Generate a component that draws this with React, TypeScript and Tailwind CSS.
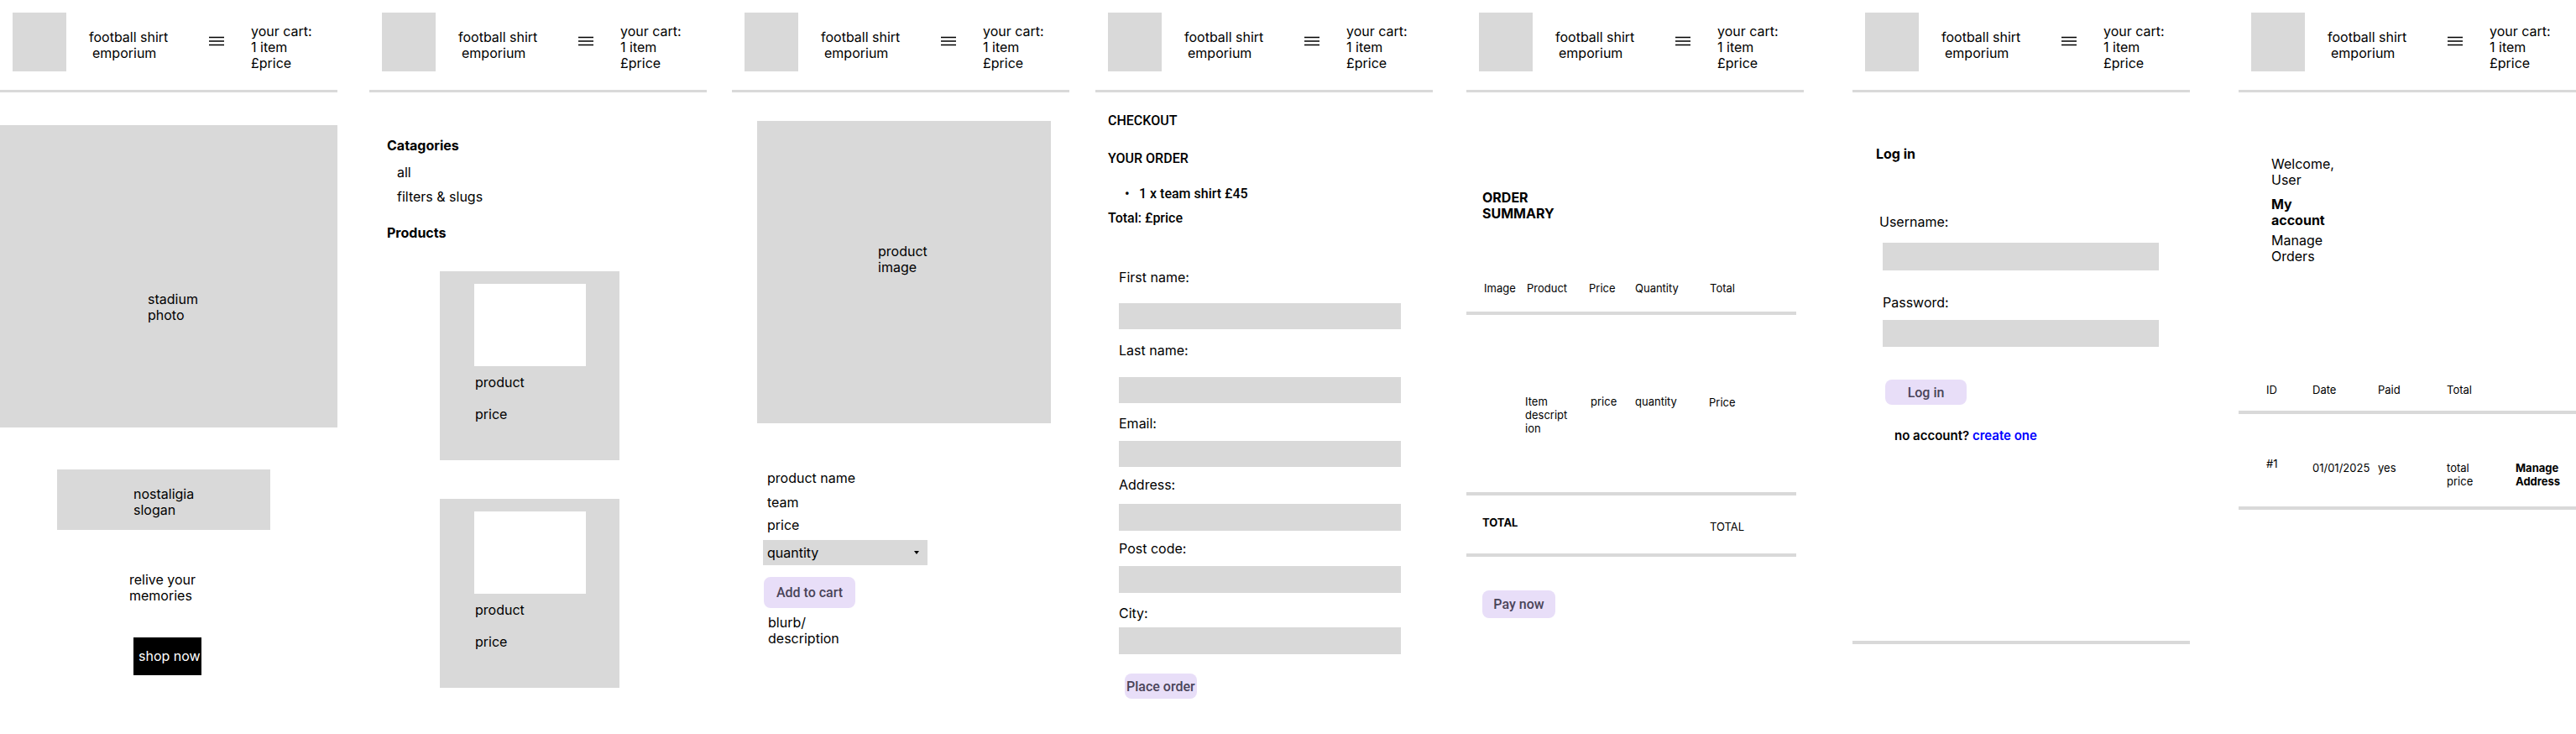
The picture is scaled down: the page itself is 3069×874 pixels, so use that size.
const gray = "bg-[#d9d9d9]";

function Header() {
  return (
    <div>
      <div className="flex h-[107px] items-start">
        <div className={`ml-[15px] mt-[15px] h-[70px] w-[64px] shrink-0 ${gray}`} />
        <div className="ml-[27px] mt-[35px] w-[143px] shrink-0 text-[16px] leading-[19px]">
          football shirt
          <br />
          <span className="pl-[4px]">emporium</span>
        </div>
        <svg className="mt-[43px] shrink-0" width="18" height="12" viewBox="0 0 18 12">
          <path d="M0 1.5H18M0 6H18M0 10.5H18" stroke="#000" strokeWidth="1.4" />
        </svg>
        <div className="ml-[32px] mt-[28px] text-[16px] leading-[19px]">
          your cart:
          <br />1 item
          <br />£price
        </div>
      </div>
      <div className={`h-[3px] w-full ${gray}`} />
    </div>
  );
}

function Frame({ children, className = "" }: { children?: React.ReactNode; className?: string }) {
  return (
    <div className={`flex h-[874px] w-[402px] shrink-0 flex-col text-[16px] leading-[19px] ${className}`}>
      <Header />
      {children}
    </div>
  );
}

function Home() {
  return (
    <Frame>
      <div className={`mt-[39px] h-[360px] w-full pl-[176px] pt-[198px] ${gray}`}>
        stadium
        <br />
        photo
      </div>
      <div className={`ml-[68px] mt-[50px] h-[72px] w-[254px] pl-[91px] pt-[20px] ${gray}`}>
        nostaligia
        <br />
        slogan
      </div>
      <div className="ml-[154px] mt-[50px]">
        relive your
        <br />
        memories
      </div>
      <button className="ml-[159px] mt-[40px] flex h-[45px] w-[81px] items-center bg-black pl-[6px] text-white">
        shop now
      </button>
    </Frame>
  );
}

function ProductCard() {
  return (
    <div className={`ml-[84px] h-[225px] w-[214px] pl-[41px] pt-[15px] ${gray}`}>
      <div className="h-[98px] w-[133px] bg-white" />
      <div className="ml-[1px] mt-[10px]">product</div>
      <div className="ml-[1px] mt-[19px]">price</div>
    </div>
  );
}

function Shop() {
  return (
    <Frame className="ml-[38px]">
      <div className="ml-[21px] mt-[54px] font-bold">Catagories</div>
      <div className="ml-[33px] mt-[13px]">all</div>
      <div className="ml-[33px] mt-[10px]">filters &amp; slugs</div>
      <div className="ml-[21px] mt-[24px] font-bold">Products</div>
      <div className="mt-[36px]">
        <ProductCard />
      </div>
      <div className="mt-[46px]">
        <ProductCard />
      </div>
    </Frame>
  );
}

function Product() {
  return (
    <Frame className="ml-[30px]">
      <div className={`ml-[30px] mt-[34px] h-[360px] w-[350px] pl-[144px] pt-[146px] ${gray}`}>
        product
        <br />
        image
      </div>
      <div className="ml-[42px] mt-[56px]">product name</div>
      <div className="ml-[42px] mt-[10px]">team</div>
      <div className="ml-[42px] mt-[8px]">price</div>
      <div className={`ml-[37px] mt-[8px] flex h-[30px] w-[196px] items-center justify-between pl-[5px] pr-[10px] ${gray}`}>
        <span>quantity</span>
        <svg width="6" height="4" viewBox="0 0 6 4">
          <path d="M0 0H6L3 4Z" fill="#000" />
        </svg>
      </div>
      <button className="ml-[38px] mt-[14px] h-[37px] w-[109px] rounded-[8px] bg-[#e8def8] font-['Roboto',sans-serif] font-medium text-[#4a4458]">
        Add to cart
      </button>
      <div className="ml-[43px] mt-[8px]">
        blurb/
        <br />
        description
      </div>
    </Frame>
  );
}

const checkoutFields = [
  { label: "First name:", lm: "mt-[52px]", im: "mt-[21px] h-[31px]" },
  { label: "Last name:", lm: "mt-[16px]", im: "mt-[22px] h-[31px]" },
  { label: "Email:", lm: "mt-[15px]", im: "mt-[11px] h-[31px]" },
  { label: "Address:", lm: "mt-[12px]", im: "mt-[13px] h-[32px]" },
  { label: "Post code:", lm: "mt-[12px]", im: "mt-[11px] h-[32px]" },
  { label: "City:", lm: "mt-[15px]", im: "mt-[7px] h-[32px]" },
];

function Checkout() {
  return (
    <Frame className="ml-[31px]">
      <div className="font-['Roboto',sans-serif] font-medium">
        <div className="ml-[15px] mt-[24px]">CHECKOUT</div>
        <div className="ml-[15px] mt-[26px]">YOUR ORDER</div>
        <div className="ml-[35px] mt-[23px] flex">
          <span className="w-[17px]">•</span>
          <span>1 x team shirt £45</span>
        </div>
        <div className="ml-[15px] mt-[10px]">Total: £price</div>
      </div>
      {checkoutFields.map((f) => (
        <div key={f.label} className="flex flex-col">
          <div className={`ml-[28px] ${f.lm}`}>{f.label}</div>
          <div className={`ml-[28px] w-[336px] ${f.im} ${gray}`} />
        </div>
      ))}
      <button className="ml-[35px] mt-[23px] h-[30px] w-[86px] rounded-[8px] bg-[#e8def8] pl-[2px] text-left font-['Roboto',sans-serif] font-medium text-[#4a4458]">
        Place order
      </button>
    </Frame>
  );
}

function Summary() {
  return (
    <Frame className="ml-[40px]">
      <div className="ml-[19px] mt-[116px] font-bold">
        ORDER
        <br />
        SUMMARY
      </div>
      <div className="ml-[21px] mt-[71px] flex text-[13px] leading-[16px]">
        <span className="w-[51px]">Image</span>
        <span className="w-[74px]">Product</span>
        <span className="w-[55px]">Price</span>
        <span className="w-[89px]">Quantity</span>
        <span>Total</span>
      </div>
      <div className={`mt-[20px] h-[4px] w-[393px] ${gray}`} />
      <div className="ml-[70px] mt-[95px] flex items-start text-[13px] leading-[16px]">
        <span className="w-[78px]">
          Item
          <br />
          descript
          <br />
          ion
        </span>
        <span className="w-[53px]">price</span>
        <span className="w-[88px]">quantity</span>
        <span className="mt-[1px]">Price</span>
      </div>
      <div className={`mt-[68px] h-[4px] w-[393px] ${gray}`} />
      <div className="ml-[19px] mt-[24px] flex items-start text-[13px] leading-[16px]">
        <span className="w-[271px] font-bold">TOTAL</span>
        <span className="mt-[5px]">TOTAL</span>
      </div>
      <div className={`mt-[24px] h-[4px] w-[393px] ${gray}`} />
      <button className="ml-[19px] mt-[40px] h-[33px] w-[87px] rounded-[8px] bg-[#e8def8] font-['Roboto',sans-serif] font-medium text-[#4a4458]">
        Pay now
      </button>
    </Frame>
  );
}

function Login() {
  return (
    <Frame className="ml-[58px]">
      <div className="ml-[28px] mt-[64px] font-bold">Log in</div>
      <div className="ml-[32px] mt-[62px]">Username:</div>
      <div className={`ml-[36px] mt-[15px] h-[33px] w-[329px] ${gray}`} />
      <div className="ml-[36px] mt-[29px]">Password:</div>
      <div className={`ml-[36px] mt-[11px] h-[32px] w-[329px] ${gray}`} />
      <button className="ml-[39px] mt-[39px] h-[30px] w-[97px] rounded-[8px] bg-[#e8def8] font-['Roboto',sans-serif] font-medium text-[#4a4458]">
        Log in
      </button>
      <div className="ml-[50px] mt-[28px] text-[15px] font-semibold leading-[18px]">
        no account? <span className="text-[#0000ff]">create one</span>
      </div>
      <div className={`mt-[235px] h-[4px] w-full ${gray}`} />
    </Frame>
  );
}

function Account() {
  return (
    <Frame className="ml-[58px]">
      <div className="ml-[39px] mt-[76px]">
        Welcome,
        <br />
        User
      </div>
      <div className="ml-[39px] mt-[10px] font-bold">
        My
        <br />
        account
      </div>
      <div className="ml-[39px] mt-[5px]">
        Manage
        <br />
        Orders
      </div>
      <div className="ml-[33px] mt-[141px] flex text-[13px] leading-[16px]">
        <span className="w-[55px]">ID</span>
        <span className="w-[78px]">Date</span>
        <span className="w-[82px]">Paid</span>
        <span>Total</span>
      </div>
      <div className={`mt-[17px] h-[4px] w-full ${gray}`} />
      <div className="ml-[33px] mt-[51px] flex items-start text-[13px] leading-[16px]">
        <span className="w-[55px]">#1</span>
        <span className="mt-[5px] w-[78px]">01/01/2025</span>
        <span className="mt-[5px] w-[82px]">yes</span>
        <span className="mt-[5px] w-[82px]">
          total
          <br />
          price
        </span>
        <span className="mt-[5px] font-bold">
          Manage
          <br />
          Address
        </span>
      </div>
      <div className={`mt-[22px] h-[4px] w-full ${gray}`} />
    </Frame>
  );
}

export default function App() {
  return (
    <div className="flex h-[874px] w-[3069px] items-start overflow-hidden bg-white font-['Inter',sans-serif] text-black">
      <Home />
      <Shop />
      <Product />
      <Checkout />
      <Summary />
      <Login />
      <Account />
    </div>
  );
}
